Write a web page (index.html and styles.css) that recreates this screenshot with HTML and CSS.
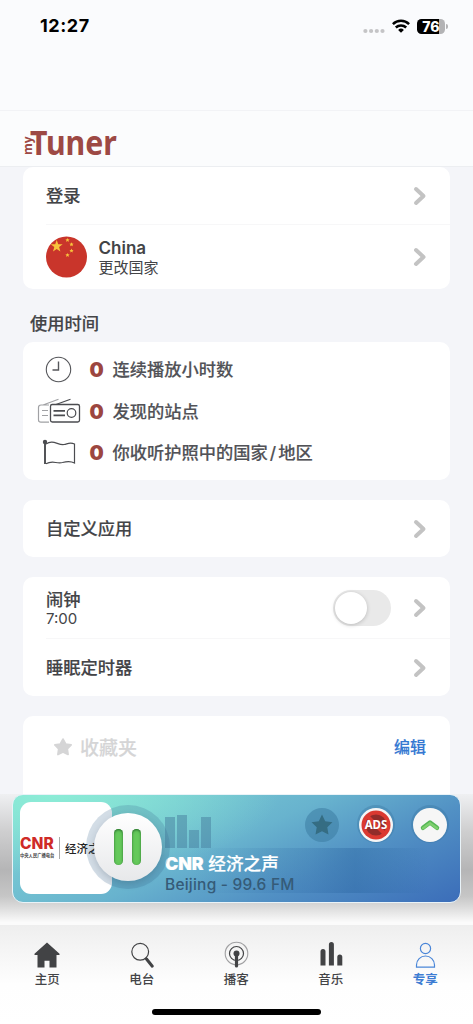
FILE: index.html
```
<!DOCTYPE html>
<html lang="zh-CN">
<head>
<meta charset="utf-8">
<title>myTuner</title>
<link rel="stylesheet" href="styles.css">
</head>
<body>
<svg class="defs" width="0" height="0">
  <symbol id="chevron" viewBox="0 0 14 20"><path d="M3 3l7.500 7L3 17" fill="none" stroke="#c3c3c3" stroke-width="4" stroke-linecap="round" stroke-linejoin="round"/></symbol>
  <symbol id="star" viewBox="0 0 20 20"><path d="M10 1.200l2.900 5.500 6.100 1-4.300 4.400.9 6.200L10 15.600l-5.600 2.700.9-6.200L1 7.700l6.100-1z" stroke="currentColor" stroke-width="2" stroke-linejoin="round" fill="currentColor"/></symbol>
  <symbol id="star-sharp" viewBox="0 0 20 20"><path d="M10 .5l2.900 6 6.600 1-4.700 4.600 1.100 6.600L10 15.600l-5.900 3.100 1.100-6.600L.5 7.500l6.600-1z" fill="currentColor"/></symbol>
</svg>
<div class="screen">
  <div class="status">
    <span class="time">12:27</span>
    <div class="signals">
      <svg width="22" height="6" viewBox="0 0 22 6" fill="#c4c4c6"><circle cx="2.400" cy="3" r="2.100"/><circle cx="8.100" cy="3" r="2.100"/><circle cx="13.800" cy="3" r="2.100"/><circle cx="19.500" cy="3" r="2.100"/></svg>
      <svg class="wifi" width="18" height="14" viewBox="0 0 18 14" fill="none" stroke="#000" stroke-width="2.500"><path d="M.9 5.100a11.600 11.600 0 0 1 16.200 0"/><path d="M3.800 8.500a7.500 7.500 0 0 1 10.400 0"/><path d="M9 13.700L6.100 10.900a4.200 4.200 0 0 1 5.800 0z" fill="#000" stroke="none"/></svg>
      <span class="battery">76</span><span class="battery-cap"></span>
    </div>
  </div>
  <header class="brand"><span class="my">my</span><span class="tuner">Tuner</span></header>

  <main class="content">
    <section class="card first">
      <div class="row login"><span class="label">登录</span><svg class="chev"><use href="#chevron"/></svg></div>
      <div class="row country">
        <svg class="flag" width="42" height="42" viewBox="0 0 42 42"><circle cx="20.500" cy="21" r="20.500" fill="#c9352b"/><g fill="#f8c43c"><path d="M10.700 4l1.500 4.200 4.500.1-3.600 2.800 1.300 4.300-3.700-2.500L7 15.400l1.300-4.300-3.600-2.800 4.500-.1z"/><path id="s" d="M21.500 1.900l.6 1.400 1.500.1-1.100 1 .3 1.500-1.300-.8-1.300.8.3-1.500-1.100-1 1.500-.1z"/><use href="#s" x="4" y="4.300"/><use href="#s" x="4" y="10.700"/><use href="#s" y="15"/></g></svg>
        <div class="stack"><span class="name">China</span><span class="sub">更改国家</span></div>
        <svg class="chev"><use href="#chevron"/></svg>
      </div>
    </section>

    <h2 class="heading">使用时间</h2>

    <section class="card stats">
      <div class="stat"><span class="pic"><svg width="28" height="28" viewBox="0 0 28 28" fill="none" stroke="#55565a" stroke-width="1.100"><circle cx="13.500" cy="13.500" r="12.200"/><path d="M13.500 5.500v8.500H7.500" stroke-width="1.400"/></svg></span><b class="num">0</b><span class="label">连续播放小时数</span></div>
      <div class="stat"><span class="pic"><svg width="44" height="28" viewBox="0 0 44 28" fill="none" stroke="#4b4c50"><g stroke="#a0a1a4" stroke-width="1.200"><path d="M12 7H4Q1.500 7 1.500 9.500v12.500Q1.500 24.200 4 24.200h8M6 7L21.500 1.200M5 12.500h6M5 17.500h6"/></g><rect x="13.500" y="6.500" width="29" height="17.500" rx="1.800" stroke-width="1.300"/><path d="M19 6.500L33.500 1.200" stroke-width="1.200"/><path d="M16.500 12.800h11.500M16.500 17.300h11.500" stroke-width="1.800"/><circle cx="34.500" cy="15" r="4.300" stroke-width="1.200"/></svg></span><b class="num">0</b><span class="label">发现的站点</span></div>
      <div class="stat"><span class="pic"><svg width="36" height="28" viewBox="0 0 36 28" fill="none" stroke="#4b4c50"><path d="M4 3v22" stroke-width="1.900"/><circle cx="4" cy="3" r="2.200" fill="#4b4c50" stroke="none"/><path d="M5 5c7-5 12 1.500 18 .5 4-.8 6-2.500 10.500-.5v19c-4.500-2.500-8.500-1.500-12-.5-6 1.500-10-2.500-16.500 1.300" stroke-width="1.200"/></svg></span><b class="num">0</b><span class="label">你收听护照中的国家<i>/</i>地区</span></div>
    </section>

    <section class="card custom"><div class="row"><span class="label">自定义应用</span><svg class="chev"><use href="#chevron"/></svg></div></section>

    <section class="card timers">
      <div class="row alarm">
        <div class="stack"><span class="label">闹钟</span><span class="sub clock">7:00</span></div>
        <span class="toggle"><span class="knob"></span></span>
        <svg class="chev"><use href="#chevron"/></svg>
      </div>
      <div class="row sleep"><span class="label">睡眠定时器</span><svg class="chev"><use href="#chevron"/></svg></div>
    </section>

    <section class="card favorites"><svg width="18" height="18"><use href="#star"/></svg><span class="fav">收藏夹</span><span class="edit">编辑</span></section>
  </main>

  <div class="dock">
    <div class="player">
      <div class="art">
        <div class="cnr"><span class="cnr-name">CNR</span><span class="cnr-sub">中央人民广播电台</span></div>
        <span class="art-title">经济之声</span>
      </div>
      <div class="pause"><div class="pause-face"><span class="pause-bar"></span><span class="pause-bar"></span></div></div>
      <div class="info">
        <div class="top">
          <div class="bars"><span class="b1"></span><span class="b2"></span><span class="b3"></span><span class="b4"></span></div>
          <div class="actions">
            <span class="round star"><svg width="22" height="22"><use href="#star-sharp"/></svg></span>
            <span class="round ads"><svg class="ads-bg" width="30" height="30" viewBox="0 0 30 30"><circle cx="15" cy="15" r="14.500" fill="#db3931"/><circle cx="15" cy="15" r="10.500" fill="#922c2a"/><path d="M6 6l18 18" stroke="#db3931" stroke-width="4"/></svg><span class="ads-text">ADS</span></span>
            <span class="round up"><svg width="22" height="14" viewBox="0 0 22 14" fill="none"><path d="M4 9.800l7-5.300 7 5.300" stroke="#55b656" stroke-width="4.400" stroke-linecap="round" stroke-linejoin="round"/><path d="M4 10.300l7-5.200 7 5.200" stroke="#7fd06e" stroke-width="2.400" stroke-linecap="round" stroke-linejoin="round"/></svg></span>
          </div>
        </div>
        <div class="now"><span class="station"><b>CNR</b> 经济之声</span><span class="place">Beijing - 99.6 FM</span></div>
      </div>
    </div>
  </div>

  <nav class="tabs">
    <div class="tab"><svg width="28" height="28" viewBox="0 0 28 28" fill="#424345"><path d="M14 1.500L26.500 12.700V14h-3v12.500h-7v-6.800h-5v6.800h-7V14h-3v-1.300z"/></svg><span>主页</span></div>
    <div class="tab"><svg width="28" height="28" viewBox="0 0 28 28" fill="none" stroke="#424345"><circle cx="12.200" cy="10.800" r="8.400" stroke-width="1.200"/><path d="M17.500 17l2 2" stroke-width="1.800"/><path d="M18.500 18l5.800 7.200" stroke-width="3" stroke-linecap="round"/></svg><span>电台</span></div>
    <div class="tab"><svg width="28" height="28" viewBox="0 0 28 28" fill="none" stroke="#424345"><circle cx="14.500" cy="12.500" r="11.300" stroke="#a0a0a2" stroke-width="1.100"/><circle cx="14.500" cy="12.500" r="7" stroke-width="1.200"/><circle cx="14.500" cy="12.500" r="3" fill="#424345" stroke="none"/><path d="M14.500 14.500v10.500" stroke-width="3.200" stroke-linecap="round"/></svg><span>播客</span></div>
    <div class="tab"><svg width="28" height="28" viewBox="0 0 28 28" fill="#424345"><path d="M3.500 24.500v-14a2.500 2.500 0 0 1 5 0v14zM11.900 24.500v-21a2.500 2.500 0 0 1 5 0v21zM20.300 24.500v-8.500a2.500 2.500 0 0 1 5 0v8.500z"/></svg><span>音乐</span></div>
    <div class="tab active"><svg width="28" height="28" viewBox="0 0 28 28" fill="none" stroke="#4a86d8" stroke-width="1.200"><circle cx="14.500" cy="7.500" r="5.100"/><path d="M5.500 26.200v-2.200a9 9 0 0 1 18 0v2.200z"/></svg><span>专享</span></div>
    <span class="home-bar"></span>
  </nav>
</div>
</body>
</html>
```
FILE: styles.css
```
* { box-sizing: border-box; }
body { margin: 0; font-family: Inter, "Noto Sans CJK SC", sans-serif; color: #434447; }
svg { display: block; flex: none; }
.defs { position: absolute; }
.screen { width: 473px; height: 1024px; display: flex; flex-direction: column; overflow: hidden; background: #f4f5f9; }

.status { height: 111px; flex: none; display: flex; justify-content: space-between; align-items: flex-start; padding: 15px 25px 0 40px; background: #fafbfd; border-bottom: 1px solid #f2f3f6; }
.time { font-size: 18px; line-height: 22px; font-weight: 700; color: #000; letter-spacing: .55px; }
.signals { display: flex; align-items: center; height: 22px; }
.signals > svg:first-child { margin: 9px 7px 0 0; }
.wifi { margin-right: 7px; }
.battery { width: 28px; height: 15px; border-radius: 4.500px; background: linear-gradient(90deg, #000 77%, #b3b3b5 77%); color: #fff; font-size: 14px; line-height: 15px; font-weight: 800; text-align: center; }
.battery-cap { width: 2px; height: 5px; margin-left: 1px; border-radius: 0 2px 2px 0; background: #b3b3b5; }

.brand { height: 56px; flex: none; display: flex; align-items: flex-start; padding: 13px 0 0 22px; background: #fbfcfd; border-bottom: 1px solid #eceef1; color: #9d4944; }
.my { writing-mode: vertical-rl; transform: rotate(180deg); font: 700 12px/11px "Open Sans", sans-serif; height: 24px; margin-top: 7px; }
.tuner { font: 700 34px/35px "Noto Sans", sans-serif; margin: .5px 0 0 -3px; transform: scaleX(.89); transform-origin: 0 0; }

.content { height: 627px; flex: none; overflow: hidden; padding: 0 23px; }
.card { background: #fff; border-radius: 10px; overflow: hidden; }
.row { display: flex; align-items: center; padding: 0 23px 0 23px; }
.label { font-size: 17.250px; line-height: 24px; font-weight: 500; -webkit-text-stroke: .15px currentColor; }
.chev { width: 14px; height: 20px; margin-left: auto; }
.row + .row { background: linear-gradient(#f7f7f8, #f7f7f8) 23px 0 / 100% 1px no-repeat; }
.login { height: 57px; }
.country { height: 65px; }
.stack { display: flex; flex-direction: column; }
.flag + .stack { margin-left: 10.500px; padding-top: 3px; }
.name { font-size: 17px; line-height: 19px; font-weight: 600; }
.sub { font-size: 15px; line-height: 20px; }

.heading { margin: 23px 0 0 7px; height: 30px; font-size: 17.250px; line-height: 24px; font-weight: 500; -webkit-text-stroke: .15px currentColor; }
.stats { height: 138px; padding: 7px 0 0 13px; display: flex; flex-direction: column; }
.stat { height: 41.700px; display: flex; align-items: center; }
.stat .label { color: #515257; }
.stat i { font-style: normal; padding: 0 2px; }
.pic { width: 45px; display: flex; justify-content: center; }
.num { width: 31.500px; padding-left: 8.500px; font-size: 20px; line-height: 24px; font-weight: 900; color: #9c4640; }
.custom { height: 57px; margin-top: 20px; }
.custom .row { height: 57px; }
.timers { height: 119px; margin-top: 20px; }
.alarm { height: 61px; }
.alarm .label { line-height: 21px; }
.clock { line-height: 17px; }
.sleep { height: 58px; padding-top: 1px; }
.toggle { width: 58px; height: 36px; margin-left: auto; padding: 2px; border-radius: 18px; background: #e9e9e9; }
.toggle + .chev { margin-left: 22.500px; }
.knob { display: block; width: 32px; height: 32px; border-radius: 50%; background: #fff; box-shadow: 0 1px 4px #0003; }
.favorites { height: 100px; margin-top: 20px; display: flex; align-items: flex-start; padding: 22px 24px 0 31px; color: #d5d5d6; }
.fav { margin: -3px 0 0 8px; font-size: 19px; line-height: 27px; font-weight: 500; -webkit-text-stroke: .15px currentColor; }
.edit { margin: -3px 0 0 auto; font-size: 16px; line-height: 25px; color: #3478d2; font-weight: 500; -webkit-text-stroke: .15px currentColor; }

.dock { height: 131px; flex: none; padding: 0 12px; background: linear-gradient(#eff0f2 0, #cfcfd0 28%, #b5b5b6 58%, #c6c6c6 78%, #dadada 86%, #fbfbfb 98%); }
.player { position: relative; width: 449px; height: 109px; padding: 7px 7px 0 7px; display: flex; border: 1.500px solid #e9f3f8; border-radius: 11px; background: radial-gradient(ellipse 230px 80px at 8% 0, #8cecd6 0, #8cecd600 100%), linear-gradient(155deg, #80d5d6 5%, #68b3ce 47%, #5190c4 70%, #3b6db9 100%); }
.art { width: 92px; height: 92px; border-radius: 11px; background: #fff; display: flex; align-items: center; overflow: hidden; flex: none; }
.cnr { width: 40px; flex: none; height: 22px; border-right: 1px solid #aaa; display: flex; flex-direction: column; justify-content: space-between; }
.cnr-name { font: 800 15.500px/14px Inter, sans-serif; color: #cf2a27; }
.cnr-sub { font-size: 4.300px; line-height: 6px; font-weight: 700; color: #444; white-space: nowrap; }
.art-title { margin-left: 5px; font-size: 11.500px; font-weight: 500; white-space: nowrap; color: #222; }
.pause { position: absolute; left: 72.500px; top: 10px; width: 84px; height: 84px; padding: 8px; border-radius: 50%; background: #36658c38; }
.pause-face { width: 68px; height: 68px; border-radius: 50%; background: linear-gradient(#fff, #e7e8ea); box-shadow: 0 3px 7px #2343; display: flex; align-items: center; justify-content: center; gap: 8.500px; }
.pause-bar { width: 9px; height: 36px; border-radius: 4.500px; background: #65c95b; box-shadow: inset 0 1px 2.500px #246a29; }
.info { flex: 1; min-width: 0; padding-left: 53px; display: flex; flex-direction: column; }
.top { height: 46px; display: flex; justify-content: space-between; align-items: flex-start; padding: 3px 6px 0 0; }
.bars { display: flex; align-items: flex-end; gap: 2px; height: 43px; }
.bars span { width: 10px; background: #467e9e80; }
.b1 { height: 31px; } .b2 { height: 33px; } .b3 { height: 18px; } .b4 { height: 31px; }
.actions { display: flex; gap: 20px; padding-top: 3px; }
.round { width: 34px; height: 34px; border-radius: 50%; display: flex; align-items: center; justify-content: center; }
.star { color: #356d83; background: #37779e80; }
.ads, .up { background: #f6f6f6; box-shadow: 0 -1px 0 2px #326f9a50; }
.ads { position: relative; }
.ads-text { position: absolute; color: #fff; font: 700 11.500px/12px "Noto Sans", sans-serif; }
.now { height: 45px; margin-right: 24px; display: flex; flex-direction: column; padding-top: 5px; background: linear-gradient(90deg, #2a65a000 10%, #2a65a038 55%, #2a65a066 72%, #2a65a000 100%); }
.station { font-size: 17.600px; line-height: 22px; color: #fff; font-weight: 500; white-space: nowrap; -webkit-text-stroke: .2px currentColor; }
.station b { font-weight: 900; font-size: 17.700px; }
.place { font-size: 15.500px; line-height: 19px; font-weight: 500; color: #355b78; letter-spacing: .22px; }

.tabs { position: relative; height: 99px; flex: none; padding: 15.500px 0 0; display: grid; grid-template-columns: repeat(5, 94.500px); align-items: start; background: linear-gradient(#eee 0, #f5f5f5 25%, #fefefe 60%, #fff 100%); }
.tab { display: flex; flex-direction: column; align-items: center; gap: 2px; font-size: 12.500px; line-height: 18px; font-weight: 500; }
.tab.active { color: #3e7dd3; font-weight: 700; }
.home-bar { position: absolute; left: 152px; bottom: 9px; width: 169px; height: 6px; border-radius: 3px; background: #000; }
```
